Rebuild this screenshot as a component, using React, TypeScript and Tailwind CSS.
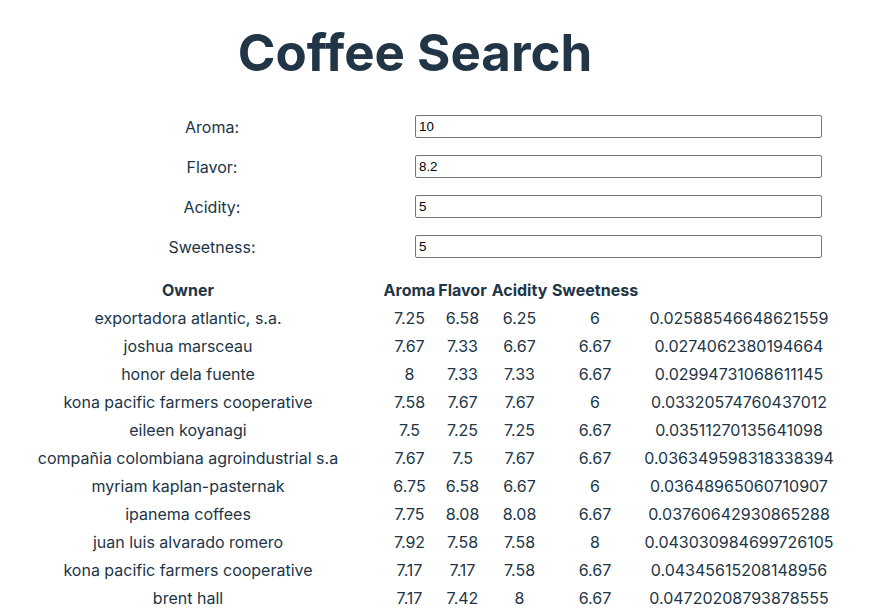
const rows: [string, string, string, string, string, string][] = [
  ["exportadora atlantic, s.a.", "7.25", "6.58", "6.25", "6", "0.02588546648621559"],
  ["joshua marsceau", "7.67", "7.33", "6.67", "6.67", "0.0274062380194664"],
  ["honor dela fuente", "8", "7.33", "7.33", "6.67", "0.02994731068611145"],
  ["kona pacific farmers cooperative", "7.58", "7.67", "7.67", "6", "0.03320574760437012"],
  ["eileen koyanagi", "7.5", "7.25", "7.25", "6.67", "0.03511270135641098"],
  ["compañia colombiana agroindustrial s.a", "7.67", "7.5", "7.67", "6.67", "0.036349598318338394"],
  ["myriam kaplan-pasternak", "6.75", "6.58", "6.67", "6", "0.03648965060710907"],
  ["ipanema coffees", "7.75", "8.08", "8.08", "6.67", "0.03760642930865288"],
  ["juan luis alvarado romero", "7.92", "7.58", "7.58", "8", "0.043030984699726105"],
  ["kona pacific farmers cooperative", "7.17", "7.17", "7.58", "6.67", "0.04345615208148956"],
  ["brent hall", "7.17", "7.42", "8", "6.67", "0.04720208793878555"],
];

const fields = [
  ["Aroma:", "10"],
  ["Flavor:", "8.2"],
  ["Acidity:", "5"],
  ["Sweetness:", "5"],
];

export default function App() {
  return (
    <div className="min-h-screen bg-white text-[#213547] font-['Inter',sans-serif] text-base">
      {/* heading */}
      <div className="w-[830px] pt-[22px] text-center">
        <h1 className="text-[51px] leading-[62px] font-bold">Coffee Search</h1>
      </div>

      {/* form */}
      <div className="mt-[31px] flex flex-col gap-[17px]">
        {fields.map(([label, value]) => (
          <div key={label} className="flex items-center h-[23px]">
            <div className="w-[415px] text-center pl-[9px]">{label}</div>
            <input
              readOnly
              value={value}
              className="w-[407px] h-[23px] border border-[#767676] rounded-[2px] px-[3px] text-[13.33px] text-black font-['Liberation_Sans',Arial,sans-serif]"
            />
          </div>
        ))}
      </div>

      {/* results */}
      <table className="mt-[18px] ml-[36px] border-collapse">
        <thead>
          <tr className="h-[28px] font-bold">
            <th className="w-[304px] text-center">Owner</th>
            <th className="w-[43px]"></th>
            <th className="w-[53px] text-center">Aroma</th>
            <th className="w-[53px] text-center">Flavor</th>
            <th className="w-[61px] text-center">Acidity</th>
            <th className="w-[90px] text-center">Sweetness</th>
            <th className="w-[198px]"></th>
          </tr>
        </thead>
        <tbody>
          {rows.map((r, i) => (
            <tr key={i} className="h-[28px]">
              <td className="text-center">{r[0]}</td>
              <td></td>
              <td className="text-center">{r[1]}</td>
              <td className="text-center">{r[2]}</td>
              <td className="text-center">{r[3]}</td>
              <td className="text-center">{r[4]}</td>
              <td className="text-center">{r[5]}</td>
            </tr>
          ))}
        </tbody>
      </table>
    </div>
  );
}
